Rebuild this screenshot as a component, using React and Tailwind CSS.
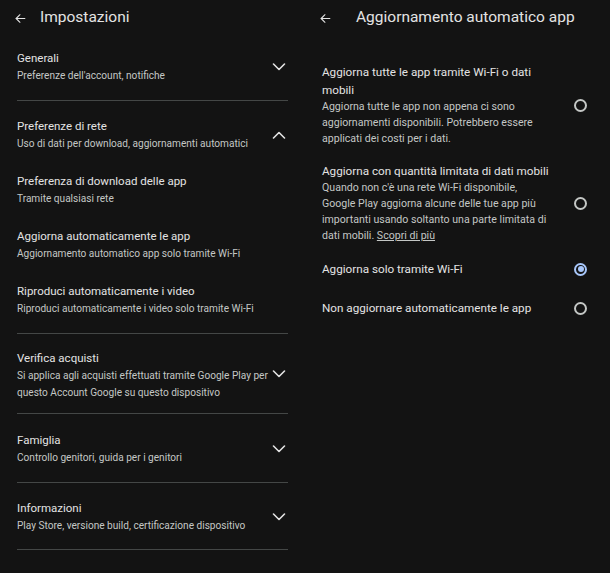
import React from 'react';

const font = { fontFamily: 'Roboto, "Noto Sans", sans-serif' };

function BackArrow() {
  return (
    <svg width="13" height="13" viewBox="0 0 24 24" fill="none" stroke="#e3e3e3" strokeWidth="2" strokeLinecap="round" strokeLinejoin="round">
      <path d="M20 12H4" />
      <path d="M11 5l-7 7 7 7" />
    </svg>
  );
}

function Chevron({ up }) {
  return (
    <svg width="14" height="8" viewBox="0 0 14 8" fill="none" stroke="#e3e3e3" strokeWidth="1.6" strokeLinecap="round" strokeLinejoin="round">
      {up ? <path d="M1.5 7L7 1.5 12.5 7" /> : <path d="M1.5 1L7 6.5 12.5 1" />}
    </svg>
  );
}

function Radio({ checked }) {
  if (checked) {
    return (
      <div className="w-[13px] h-[13px] rounded-full border-2 border-[#a8c7fa] flex items-center justify-center">
        <div className="w-[6px] h-[6px] rounded-full bg-[#a8c7fa]" />
      </div>
    );
  }
  return <div className="w-[13px] h-[13px] rounded-full border-2 border-[#c4c7c5]" />;
}

function Row({ title, sub, chevron, className = '' }) {
  return (
    <div className={`flex items-center justify-between ${className}`}>
      <div>
        <div className="text-[11.5px] leading-[17px] text-[#e3e3e3]">{title}</div>
        <div className="text-[10.1px] leading-[17px] text-[#c4c7c5]">{sub}</div>
      </div>
      {chevron && (
        <div className="w-[14px] flex justify-center shrink-0 mr-[2px]">
          <Chevron up={chevron === 'up'} />
        </div>
      )}
    </div>
  );
}

function Divider() {
  return <div className="h-px bg-[#444746]" />;
}

function SettingsPanel() {
  return (
    <div className="w-[305px] shrink-0 px-[17px]">
      <div className="h-[36px] flex items-center -ml-[3px]">
        <BackArrow />
        <span className="ml-[13px] text-[15.5px] text-[#e3e3e3]">Impostazioni</span>
      </div>

      <Row className="pt-[14px] pb-[16px]" title="Generali" sub="Preferenze dell'account, notifiche" chevron="down" />
      <Divider />

      <div className="pt-[17px] pb-[16px] flex flex-col gap-[21px]">
        <Row title="Preferenze di rete" sub="Uso di dati per download, aggiornamenti automatici" chevron="up" />
        <Row title="Preferenza di download delle app" sub="Tramite qualsiasi rete" />
        <Row title="Aggiorna automaticamente le app" sub="Aggiornamento automatico app solo tramite Wi-Fi" />
        <Row title="Riproduci automaticamente i video" sub="Riproduci automaticamente i video solo tramite Wi-Fi" />
      </div>
      <Divider />

      <div className="pt-[16px] pb-[12px] flex items-center justify-between">
        <div>
          <div className="text-[11.5px] leading-[17px] text-[#e3e3e3]">Verifica acquisti</div>
          <div className="text-[10.1px] leading-[17px] text-[#c4c7c5] w-[254px]">
            Si applica agli acquisti effettuati tramite Google Play per questo Account Google su questo dispositivo
          </div>
        </div>
        <div className="w-[14px] flex justify-center shrink-0 mr-[2px] -mt-[4px]">
          <Chevron />
        </div>
      </div>
      <Divider />

      <Row className="pt-[18px] pb-[16px]" title="Famiglia" sub="Controllo genitori, guida per i genitori" chevron="down" />
      <Divider />

      <Row className="pt-[17px] pb-[15px]" title="Informazioni" sub="Play Store, versione build, certificazione dispositivo" chevron="down" />
      <Divider />
    </div>
  );
}

function Option({ title, children, checked, className = '' }) {
  return (
    <div className={`flex items-center justify-between ${className}`}>
      <div className="w-[228px]">
        <div className="text-[11.7px] leading-[18px] text-[#e3e3e3]">{title}</div>
        {children && <div className="text-[10.6px] leading-[16px] text-[#c4c7c5]">{children}</div>}
      </div>
      <div className="mr-[23px]">
        <Radio checked={checked} />
      </div>
    </div>
  );
}

function AutoUpdatePanel() {
  return (
    <div className="flex-1 pl-[14px]">
      <div className="h-[36px] flex items-center">
        <BackArrow />
        <span className="ml-[24px] text-[15.5px] text-[#e3e3e3]">Aggiornamento automatico app</span>
      </div>
      <div className="pl-[3px]">
        <Option className="mt-[27px]" title="Aggiorna tutte le app tramite Wi-Fi o dati mobili">
          Aggiorna tutte le app non appena ci sono aggiornamenti disponibili. Potrebbero essere applicati dei costi per i dati.
        </Option>
        <Option className="mt-[15px]" title="Aggiorna con quantità limitata di dati mobili">
          Quando non c'è una rete Wi-Fi disponibile, Google Play aggiorna alcune delle tue app più importanti usando soltanto una parte limitata di dati mobili.{' '}
          <span className="underline">Scopri di più</span>
        </Option>
        <Option className="mt-[16px]" title="Aggiorna solo tramite Wi-Fi" checked />
        <Option className="mt-[21px]" title="Non aggiornare automaticamente le app" />
      </div>
    </div>
  );
}

export default function App() {
  return (
    <div className="w-[610px] h-[573px] bg-[#131313] flex overflow-hidden" style={font}>
      <SettingsPanel />
      <AutoUpdatePanel />
    </div>
  );
}
